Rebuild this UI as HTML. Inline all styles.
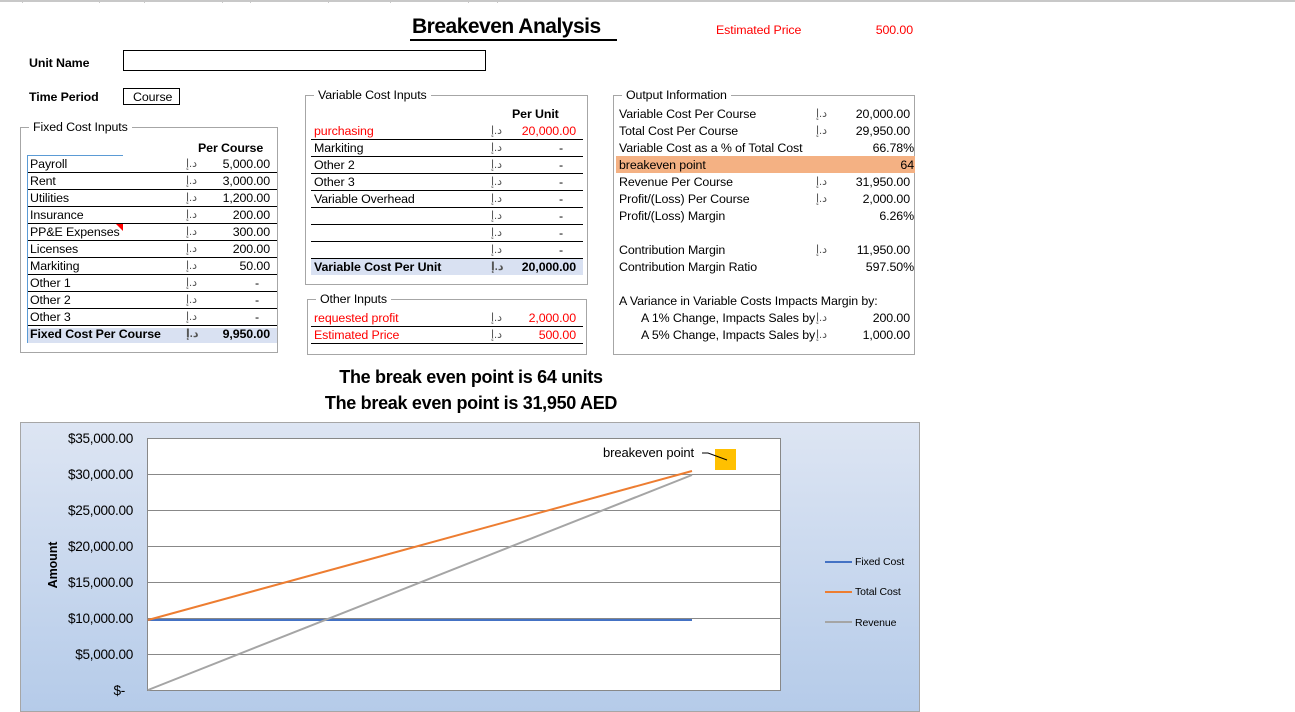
<!DOCTYPE html>
<html><head><meta charset="utf-8"><style>
*{margin:0;padding:0;box-sizing:border-box}
body{width:1295px;height:700px;overflow:hidden;background:#fff;position:relative;font-family:"Liberation Sans","DejaVu Sans",sans-serif;font-size:12.4px;color:#000;letter-spacing:-0.1px}
.a{position:absolute;white-space:nowrap;line-height:14px}
.b{font-weight:bold}
.r{color:#f00}
.R{text-align:right}
.box{position:absolute;border:1px solid #a6a6a6}
.lg{position:absolute;background:#fff;padding:0 4px;line-height:14px;white-space:nowrap}
.ln{position:absolute;height:1px;background:#000}
.cur{position:absolute;font-size:11px;line-height:14px;color:#555}
</style></head><body>
<div style="position:absolute;left:0;top:0;width:1295px;height:2px;background:#c8c8c8"></div>

<div class="a b" style="left:412px;top:15px;font-size:21px;line-height:24px;letter-spacing:-0.5px">Breakeven Analysis</div>
<div style="position:absolute;left:410px;top:39px;width:207px;height:2px;background:#000"></div>
<div class="a r" style="left:716px;top:23px">Estimated Price</div>
<div class="a r R" style="left:840px;width:73px;top:23px">500.00</div>

<div class="a b" style="left:29px;top:56px">Unit Name</div>
<div style="position:absolute;left:123px;top:50px;width:363px;height:21px;border:1px solid #000"></div>
<div class="a b" style="left:29px;top:90px">Time Period</div>
<div style="position:absolute;left:123px;top:88px;width:57px;height:17px;border:1px solid #000"></div>
<div class="a" style="left:133px;top:90px">Course</div>

<!-- Fixed cost -->
<div class="box" style="left:20px;top:127px;width:258px;height:226px"></div>
<div class="lg" style="left:29px;top:120px">Fixed Cost Inputs</div>
<div class="a b" style="left:198px;top:141px">Per Course</div>
<div style="position:absolute;left:28px;top:328px;width:249px;height:15px;background:#d9e1f2"></div>
<div id="fc"></div>

<!-- Variable -->
<div class="box" style="left:305px;top:95px;width:283px;height:190px"></div>
<div class="lg" style="left:314px;top:88px">Variable Cost Inputs</div>
<div class="a b" style="left:512px;top:107px">Per Unit</div>
<div style="position:absolute;left:311px;top:259px;width:272px;height:16px;background:#d9e1f2"></div>

<div class="box" style="left:307px;top:299px;width:280px;height:56px"></div>
<div class="lg" style="left:316px;top:292px">Other Inputs</div>

<!-- Output -->
<div class="box" style="left:613px;top:95px;width:302px;height:260px"></div>
<div class="lg" style="left:622px;top:88px">Output Information</div>
<div style="position:absolute;left:616px;top:156px;width:299px;height:17px;background:#f4b183"></div>

<div id="rows"></div>

<div class="a b" style="left:221px;top:367px;width:500px;text-align:center;font-size:18px;line-height:20px;letter-spacing:-0.3px">The break even point is 64 units</div>
<div class="a b" style="left:221px;top:393px;width:500px;text-align:center;font-size:18px;line-height:20px;letter-spacing:-0.3px">The break even point is 31,950 AED</div>

<!-- Chart -->
<div style="position:absolute;left:20px;top:422px;width:900px;height:290px;border:1px solid #a6a6a6;background:linear-gradient(#dde5f3,#b5cbe9)"></div>
<svg style="position:absolute;left:0;top:0" width="1295" height="700">
<rect x="147.5" y="438.5" width="633" height="252" fill="#fff" stroke="#888"/>
<g stroke="#888" stroke-width="1">
<line x1="147" y1="474.5" x2="781" y2="474.5"/><line x1="147" y1="510.5" x2="781" y2="510.5"/>
<line x1="147" y1="546.5" x2="781" y2="546.5"/><line x1="147" y1="582.5" x2="781" y2="582.5"/>
<line x1="147" y1="618.5" x2="781" y2="618.5"/><line x1="147" y1="654.5" x2="781" y2="654.5"/>
</g>
<line x1="148" y1="620" x2="692" y2="620" stroke="#4472c4" stroke-width="2"/>
<line x1="148" y1="690" x2="692" y2="475" stroke="#a5a5a5" stroke-width="2"/>
<line x1="148" y1="620" x2="692" y2="471" stroke="#ed7d31" stroke-width="2"/>
<rect x="715" y="449" width="21" height="21" fill="#ffc000"/>
<polyline points="702,453 708,453 727,460" fill="none" stroke="#000" stroke-width="1"/>
<line x1="825" y1="562" x2="852" y2="562" stroke="#4472c4" stroke-width="2"/>
<line x1="825" y1="592" x2="852" y2="592" stroke="#ed7d31" stroke-width="2"/>
<line x1="825" y1="622" x2="852" y2="622" stroke="#a5a5a5" stroke-width="2"/>
<g font-family="Liberation Sans, sans-serif" font-size="13.6" text-anchor="end" fill="#000" letter-spacing="-0.3">
<text x="133" y="443">$35,000.00</text><text x="133" y="479">$30,000.00</text>
<text x="133" y="515">$25,000.00</text><text x="133" y="551">$20,000.00</text>
<text x="133" y="587">$15,000.00</text><text x="133" y="623">$10,000.00</text>
<text x="133" y="659">$5,000.00</text><text x="125" y="695">$-</text>
</g>
<text x="0" y="0" transform="translate(57,565) rotate(-90)" text-anchor="middle" font-family="Liberation Sans, sans-serif" font-size="12.5" font-weight="bold">Amount</text>
<text x="603" y="457" font-family="Liberation Sans, sans-serif" font-size="13">breakeven point</text>
<g font-family="Liberation Sans, sans-serif" font-size="10.5">
<text x="855" y="565">Fixed Cost</text><text x="855" y="595">Total Cost</text><text x="855" y="626">Revenue</text>
</g>
<polygon points="116,224 123,224 123,231" fill="#f00"/>
<line x1="27.5" y1="156" x2="27.5" y2="343" stroke="#5b9bd5"/>
<line x1="27" y1="155.5" x2="123" y2="155.5" stroke="#5b9bd5"/>
<g stroke="#c8c8c8"><line x1="22.5" y1="0" x2="22.5" y2="3"/><line x1="99.5" y1="0" x2="99.5" y2="3"/><line x1="144.5" y1="0" x2="144.5" y2="3"/><line x1="222.5" y1="0" x2="222.5" y2="3"/><line x1="250.5" y1="0" x2="250.5" y2="3"/><line x1="328.5" y1="0" x2="328.5" y2="3"/><line x1="390.5" y1="0" x2="390.5" y2="3"/><line x1="468.5" y1="0" x2="468.5" y2="3"/><line x1="497.5" y1="0" x2="497.5" y2="3"/></g>
</svg>

<script>
var h='';
function t(x,y,s,c){h+='<div class="a '+(c||'')+'" style="left:'+x+'px;top:'+(y-7)+'px">'+s+'</div>';}
function v(xr,y,s,c){h+='<div class="a R '+(c||'')+'" style="left:'+(xr-120)+'px;width:120px;top:'+(y-7)+'px">'+s+'</div>';}
function cu(x,y,c){h+='<div class="cur '+(c||'')+'" style="left:'+x+'px;top:'+(y-7)+'px">د.إ</div>';}
function L(x,y,w){h+='<div class="ln" style="left:'+x+'px;top:'+y+'px;width:'+w+'px"></div>';}
var fc=[['Payroll','5,000.00'],['Rent','3,000.00'],['Utilities','1,200.00'],['Insurance','200.00'],['PP&amp;E Expenses','300.00'],['Licenses','200.00'],['Markiting','50.00'],['Other 1','-'],['Other 2','-'],['Other 3','-']];
fc.forEach(function(r,i){var y=164+17*i;t(30,y,r[0]);cu(186,y);v(r[1]=='-'?259:270,y,r[1]);L(28,y+8,249);});
t(30,334,'Fixed Cost Per Course','b');cu(186,334,'b');v(270,334,'9,950.00','b');
var vc=[['purchasing','20,000.00','r'],['Markiting','-'],['Other 2','-'],['Other 3','-'],['Variable Overhead','-'],['','-'],['','-'],['','-']];
vc.forEach(function(r,i){var y=131+17*i;if(r[0])t(314,y,r[0],r[2]);cu(491,y,r[2]);v(r[1]=='-'?563:576,y,r[1],r[2]);L(311,y+8,272);});
t(314,267,'Variable Cost Per Unit','b');cu(491,267,'b');v(576,267,'20,000.00','b');
t(314,318,'requested profit','r');cu(491,318,'r');v(576,318,'2,000.00','r');L(311,326,272);
t(314,335,'Estimated Price','r');cu(491,335,'r');v(576,335,'500.00','r');L(311,343,272);
var o=[[114,'Variable Cost Per Course',1,'20,000.00'],[131,'Total Cost Per Course',1,'29,950.00'],[148,'Variable Cost as a % of Total Cost',0,'66.78%'],[165,'breakeven point',0,'64'],[182,'Revenue Per Course',1,'31,950.00'],[199,'Profit/(Loss) Per Course',1,'2,000.00'],[216,'Profit/(Loss) Margin',0,'6.26%'],[250,'Contribution Margin',1,'11,950.00'],[267,'Contribution Margin Ratio',0,'597.50%'],[301,'A Variance in Variable Costs Impacts Margin by:',0,'']];
o.forEach(function(r){t(619,r[0],r[1]);if(r[2]){cu(816,r[0]);v(910,r[0],r[3]);}else if(r[3])v(914,r[0],r[3]);});
t(641,318,'A 1% Change, Impacts Sales by');cu(816,318);v(910,318,'200.00');
t(641,335,'A 5% Change, Impacts Sales by');cu(816,335);v(910,335,'1,000.00');
document.getElementById('rows').innerHTML=h;
</script>
</body></html>
